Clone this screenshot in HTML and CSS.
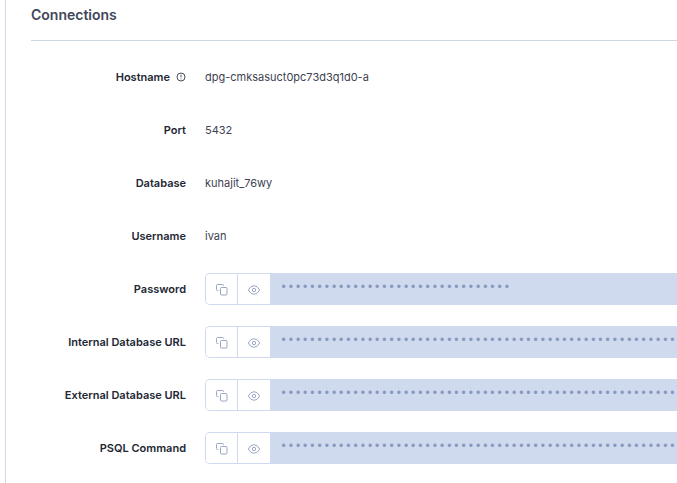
FILE: index.html
```html
<!DOCTYPE html>
<html lang="en">
<head>
<meta charset="utf-8">
<title>Connections</title>
<link rel="stylesheet" href="styles.css">
</head>
<body>
<svg class="sprite" aria-hidden="true">
  <symbol id="copy" viewBox="0 0 14 14"><path d="M3.500 7.500H2.500Q1.500 7.500 1.500 6.500V2.500Q1.500 1.500 2.500 1.500H7.500Q8.500 1.500 8.500 2.500V3"/><rect x="5.500" y="4.500" width="6.500" height="7.500" rx="1"/></symbol>
  <symbol id="eye" viewBox="0 0 14 14"><path d="M1.300 7Q3.500 2.700 7 2.700T12.700 7Q10.500 11.300 7 11.300T1.300 7Z"/><circle cx="7" cy="7" r="1.700"/></symbol>
</svg>
<main class="panel">
  <h2 class="title">Connections</h2>
  <div class="rows">
    <div class="row">
      <span class="label">Hostname
        <svg class="info" viewBox="0 0 10 10" role="img" aria-label="Info"><circle cx="5" cy="5" r="4"/><path d="M5 2.700V5.300M5 6.500V7.300"/></svg>
      </span>
      <span class="value">dpg-cmksasuct0pc73d3q1d0-a</span>
    </div>
    <div class="row"><span class="label">Port</span><span class="value">5432</span></div>
    <div class="row"><span class="label">Database</span><span class="value">kuhajit_76wy</span></div>
    <div class="row"><span class="label">Username</span><span class="value">ivan</span></div>
    <div class="row">
      <label class="label" for="password">Password</label>
      <div class="secret">
        <button class="action" type="button" aria-label="Copy"><svg class="icon"><use href="#copy"/></svg></button>
        <button class="action" type="button" aria-label="Show"><svg class="icon"><use href="#eye"/></svg></button>
        <input class="mask" id="password" type="text" readonly value="••••••••••••••••••••••••••••••••">
      </div>
    </div>
    <div class="row">
      <label class="label" for="internal">Internal Database URL</label>
      <div class="secret">
        <button class="action" type="button" aria-label="Copy"><svg class="icon"><use href="#copy"/></svg></button>
        <button class="action" type="button" aria-label="Show"><svg class="icon"><use href="#eye"/></svg></button>
        <input class="mask" id="internal" type="text" readonly value="••••••••••••••••••••••••••••••••••••••••••••••••••••••••••••••••">
      </div>
    </div>
    <div class="row">
      <label class="label" for="external">External Database URL</label>
      <div class="secret">
        <button class="action" type="button" aria-label="Copy"><svg class="icon"><use href="#copy"/></svg></button>
        <button class="action" type="button" aria-label="Show"><svg class="icon"><use href="#eye"/></svg></button>
        <input class="mask" id="external" type="text" readonly value="••••••••••••••••••••••••••••••••••••••••••••••••••••••••••••••••">
      </div>
    </div>
    <div class="row">
      <label class="label" for="psql">PSQL Command</label>
      <div class="secret">
        <button class="action" type="button" aria-label="Copy"><svg class="icon"><use href="#copy"/></svg></button>
        <button class="action" type="button" aria-label="Show"><svg class="icon"><use href="#eye"/></svg></button>
        <input class="mask" id="psql" type="text" readonly value="••••••••••••••••••••••••••••••••••••••••••••••••••••••••••••••••">
      </div>
    </div>
  </div>
</main>
</body>
</html>
```
FILE: styles.css
```css
* { box-sizing: border-box; }
body {
  margin: 0;
  background: #fff;
  color: #3d4250;
  font: 11px/16px Inter, "Liberation Sans", sans-serif;
}
.sprite { display: none; }
.panel {
  margin-left: 5px;
  padding-left: 25px;
  border-left: 1px solid #cfd9ea;
  min-height: 100vh;
}
.title {
  margin: 0;
  padding: 5px 0 15px;
  border-bottom: 1px solid #cfd6e6;
  color: #41465a;
  font-size: 14px;
  line-height: 20px;
  font-weight: 600;
}
.rows { padding-top: 9px; }
.row {
  display: grid;
  grid-template-columns: 155px minmax(0, 1fr);
  column-gap: 19px;
  align-items: center;
  height: 53px;
}
.label {
  display: flex;
  justify-content: flex-end;
  align-items: center;
  gap: 6px;
  color: #232733;
  font-weight: 600;
}
.info {
  width: 10px;
  height: 10px;
  fill: none;
  stroke: #4b5060;
}
.secret {
  display: flex;
  height: 32px;
  border: 1px solid #cfdaee;
  border-right: 0;
  border-radius: 5px 0 0 5px;
  overflow: hidden;
}
.action {
  display: flex;
  flex: none;
  align-items: center;
  justify-content: center;
  width: 31px;
  padding: 2px 0 0;
  border: 0;
  background: #fff;
}
.action + .action {
  width: 33px;
  border-left: 1px solid #cfdaee;
}
.icon {
  width: 14px;
  height: 14px;
  fill: none;
  stroke: #9ca6c4;
}
.mask {
  flex: 1;
  min-width: 0;
  padding: 0 0 2px 10px;
  border: 0;
  outline: 0;
  background: #cfdaee;
  color: #8998c0;
  font: 12px/16px "Liberation Mono", monospace;
}
```
